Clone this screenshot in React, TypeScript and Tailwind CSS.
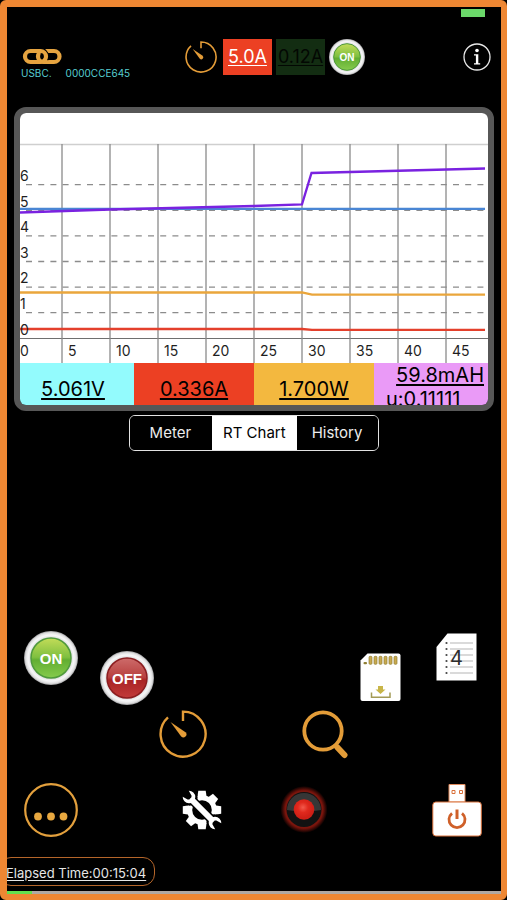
import { useState } from "react";

const metrics = [
  { value: "5.061V", tone: "bg-[#93fbfd] pr-2" },
  { value: "0.336A", tone: "bg-[#ec4023]" },
  { value: "1.700W", tone: "bg-[#f3b83f]" },
];

const tabs = ["Meter", "RT Chart", "History"];
const columns = [0, 1, 2, 3, 4, 5, 6, 7, 8, 9];
const rows = [0, 1, 2, 3, 4, 5, 6];

function LinkIcon() {
  return (
    <svg width="42" height="17" viewBox="0 0 42 17" fill="none" aria-hidden="true">
      <rect x="4" y="3" width="21" height="11" rx="5.5" stroke="#e6a440" strokeWidth="4.2" />
      <path d="M26 3h7a5.500 5.500 0 0 1 0 11H22a5.500 5.500 0 0 1-4.800-7.500" stroke="#000" strokeWidth="6.500" />
      <rect x="17" y="3" width="21.500" height="11" rx="5.500" stroke="#e6a440" strokeWidth="4.2" />
      <path d="M20 3a5.500 5.500 0 0 1 4.200 8" stroke="#000" strokeWidth="6.500" />
      <path d="M16 3h3.500a5.500 5.500 0 0 1 0 11H13" stroke="#e6a440" strokeWidth="4.2" />
    </svg>
  );
}

function TimerIcon({ size }: { size: number }) {
  return (
    <svg width={size} height={size} viewBox="0 0 48 48" fill="none" aria-hidden="true">
      <path d="M9 7.400A22.500 22.500 0 1 0 24 1.600V11" stroke="#e39c38" strokeWidth="2.400" />
      <path d="M11.500 12l15 10.200a3 3 0 1 1-4.300 4.300z" fill="#e39c38" />
    </svg>
  );
}

function RoundSwitch({ label, size, on }: { label: string; size: number; on: boolean }) {
  const id = `${label}-${size}`;
  return (
    <svg width={size} height={size} viewBox="0 0 54 54" aria-hidden="true">
      <defs>
        <radialGradient id={`ring-${id}`}>
          <stop offset="0.75" stopColor="#dcdcde" />
          <stop offset="0.85" stopColor="#f7f7f8" />
          <stop offset="0.94" stopColor="#dededf" />
          <stop offset="1" stopColor="#9d9d9f" />
        </radialGradient>
        <linearGradient id={`face-${id}`} x1="0" y1="0" x2="0" y2="1">
          <stop offset="0" stopColor={on ? "#c3dc58" : "#cd6b6a"} />
          <stop offset="0.48" stopColor={on ? "#7fc040" : "#b8403f"} />
          <stop offset="0.55" stopColor={on ? "#62ae32" : "#a92425"} />
          <stop offset="1" stopColor={on ? "#86cb4d" : "#c23a3a"} />
        </linearGradient>
      </defs>
      <circle cx="27" cy="27" r="27" fill={`url(#ring-${id})`} />
      <circle cx="27" cy="27" r="20" fill={`url(#face-${id})`} stroke={on ? "#4f9a3c" : "#8c1d20"} strokeWidth="1.500" />
      <text
        x="27"
        y="32.500"
        textAnchor="middle"
        fill="#fff"
        fontSize="15"
        fontWeight="700"
        fontFamily="'Liberation Sans', Arial, sans-serif"
      >
        {label}
      </text>
    </svg>
  );
}

function InfoIcon() {
  return (
    <svg width="28" height="28" viewBox="0 0 28 28" aria-hidden="true">
      <circle cx="14" cy="14" r="13" fill="none" stroke="#e8e8e8" strokeWidth="1.300" />
      <circle cx="14" cy="7.500" r="1.800" fill="#fff" />
      <path d="M11 11.200h4.300v9h1.900v1.200h-6.200v-1.200h1.900v-7.800H11z" fill="#fff" />
    </svg>
  );
}

function SdCardIcon() {
  return (
    <svg width="41" height="49" viewBox="0 0 41 49" aria-hidden="true">
      <path d="M7.500 .5H38.500a2 2 0 0 1 2 2v43.500a2 2 0 0 1-2 2H2.500a2 2 0 0 1-2-2V7.500z" fill="#fff" />
      <rect x="3.500" y="9" width="3.500" height="2.300" rx="1" fill="#8f7f35" />
      {[9, 14, 19, 24, 29, 34].map((x) => (
        <rect key={x} x={x} y="3.300" width="3" height="8" rx="1" fill="#c9a94f" stroke="#8f7f35" strokeWidth="0.700" />
      ))}
      <path d="M18 33h5v3.500h2.500l-5 4.500-5-4.500H18z" fill="#c8b548" />
      <path d="M11.500 39.500v4.800h18.500v-4.800" fill="none" stroke="#a39a55" strokeWidth="1.500" />
    </svg>
  );
}

function LogFileIcon() {
  return (
    <svg width="41" height="48" viewBox="0 0 41 48" aria-hidden="true">
      <path d="M11.500 .5H40.500V47.500H.5V14z" fill="#fff" />
      {[10, 16, 22, 28, 34, 40].map((y) => (
        <g key={y}>
          <circle cx="10.500" cy={y} r="1.100" fill="#444" />
          <path d={`M14 ${y}H37`} stroke="#b5b5b5" />
        </g>
      ))}
      <text x="20.500" y="32" textAnchor="middle" fill="#2d2d2d" fontSize="20" fontFamily="Inter, sans-serif">
        4
      </text>
    </svg>
  );
}

function SearchIcon() {
  return (
    <svg width="48" height="50" viewBox="0 0 48 50" fill="none" aria-hidden="true">
      <circle cx="21" cy="22" r="18.700" stroke="#e39c38" strokeWidth="3.800" />
      <path d="M32.500 36L35.500 38.500" stroke="#e39c38" strokeWidth="4.500" />
      <path d="M35.500 38.500L42.500 46" stroke="#e39c38" strokeWidth="6" strokeLinecap="round" />
    </svg>
  );
}

function MoreIcon() {
  return (
    <svg width="54" height="54" viewBox="0 0 54 54" aria-hidden="true">
      <circle cx="27" cy="27" r="25.800" fill="none" stroke="#e3a03d" strokeWidth="2.200" />
      {[14, 27, 39.5].map((cx) => (
        <circle key={cx} cx={cx} cy="33.500" r="3.900" fill="#e8a840" />
      ))}
    </svg>
  );
}

function ServiceIcon() {
  return (
    <svg width="40" height="40" viewBox="0 0 40 40" fill="none" aria-hidden="true">
      <circle cx="20" cy="20" r="12.300" stroke="#fff" strokeWidth="5" />
      {[0, 45, 90, 180, 225, 270].map((turn) => (
        <path key={turn} d="M15.300 7.500L16.300 .8h7.400l1 6.700z" fill="#fff" transform={`rotate(${turn} 20 20)`} />
      ))}
      {/* wrench laid over the cog with a dark gap round it */}
      <g transform="rotate(-45 20 20)">
        <path d="M20 4V36" stroke="#000" strokeWidth="9" />
        <circle cx="20" cy="2.500" r="8" fill="#000" />
        <circle cx="20" cy="37.500" r="8" fill="#000" />
        <path d="M20 5V35" stroke="#fff" strokeWidth="5.800" />
        <path d="M15.700-3a6.300 6.300 0 1 0 8.600 0l-1.500 5.500l-1.300 1h-3l-1.300-1z" fill="#fff" />
        <path d="M15.700 43a6.300 6.300 0 1 1 8.600 0l-1.500-5.500l-1.300-1h-3l-1.300 1z" fill="#fff" />
      </g>
    </svg>
  );
}

function RecordIcon() {
  return (
    <svg width="48" height="48" viewBox="0 0 48 48" aria-hidden="true">
      <defs>
        <radialGradient id="record-glow">
          <stop offset="0.7" stopColor="#7a1a10" />
          <stop offset="0.8" stopColor="#7a140c" />
          <stop offset="1" stopColor="#000" />
        </radialGradient>
        <radialGradient id="record-ball" cx="0.45" cy="0.4">
          <stop offset="0" stopColor="#f2594b" />
          <stop offset="0.5" stopColor="#e0291d" />
          <stop offset="1" stopColor="#cf1f16" />
        </radialGradient>
      </defs>
      <circle cx="24" cy="23.500" r="23.500" fill="url(#record-glow)" />
      <circle cx="24" cy="23.500" r="17.500" fill="#121212" />
      <path d="M7 24a17 17 0 0 1 34 0q-17 3-34 0z" fill="#363636" />
      <circle cx="24" cy="23.500" r="10.300" fill="url(#record-ball)" />
    </svg>
  );
}

function UsbIcon() {
  return (
    <svg width="50" height="54" viewBox="0 0 50 54" fill="none" aria-hidden="true">
      <path d="M17 1.500h16v17.500h-16z" fill="#fff" stroke="#e08a5c" />
      <path d="M20 7.500h3v3h-3zM27.500 7.500h3v3h-3z" stroke="#d9703a" />
      <rect x=".8" y="19" width="48.500" height="34" rx="3" fill="#fff" stroke="#d9703a" />
      <path d="M20 30.300a8 8 0 1 0 10 0" stroke="#cf6029" strokeWidth="2.800" />
      <path d="M25 26.500v9.500" stroke="#cf6029" strokeWidth="3" />
    </svg>
  );
}

function RealtimeChart() {
  return (
    <svg viewBox="0 0 468 250" className="block h-auto w-full bg-white" role="img" aria-label="Real time chart">
      <path d="M0 31.500H468" stroke="#cfcfcf" strokeWidth="1.500" />
      <path d="M0 225.500H468" stroke="#6f6f6f" />
      {columns.slice(1).map((i) => (
        <path key={i} d={`M${i * 48 - 6} 31V250`} stroke="#8a8a8a" strokeWidth="1.300" />
      ))}
      {rows.slice(1).map((i) => (
        <path key={i} d={`M6 ${225.3 - i * 25.6}H464`} stroke="#8c8c8c" strokeWidth="1.300" strokeDasharray="6 6.200" />
      ))}
      <g fill="none" strokeWidth="2.300">
        <path d="M0 95.800H465" stroke="#4a86d4" />
        <path d="M0 99.500L90 96.500L234 93L282 91.300L291.500 60L465 55.500" stroke="#7a22e0" />
        <path d="M0 179.500H282L292 181.700H465" stroke="#eaa63c" />
        <path d="M0 216H282L292 216.800H465" stroke="#e4402c" />
      </g>
      <g fill="#1f1f1f" fontSize="14" fontFamily="Inter, sans-serif">
        {rows.map((i) => (
          <text key={i} x="0" y={221.5 - i * 25.6}>
            {i}
          </text>
        ))}
        {columns.map((i) => (
          <text key={i} x={i * 48} y="243">
            {i * 5}
          </text>
        ))}
      </g>
    </svg>
  );
}

export default function App() {
  const [tab, setTab] = useState("RT Chart");

  return (
    <div className="min-h-screen bg-black font-['Inter',sans-serif]">
      <main className="flex min-h-screen flex-col overflow-hidden rounded-md border-[7px] border-r-[6px] border-b-[6px] border-[#ee8733]">
        <div className="flex justify-end pt-0.5 pr-4">
          <div className="h-2 w-6 bg-[#6bd86a]" role="img" aria-label="Battery" />
        </div>

        {/* device header */}
        <header className="mt-[15px] flex items-center pr-2.5 pl-3.5">
          <div className="w-[164px] pt-4">
            <LinkIcon />
            <div className="flex gap-3.5 text-[10px] leading-4 text-[#56cdd0]">
              <span>USBC.</span>
              <span>0000CCE645</span>
            </div>
          </div>
          <div className="flex items-center gap-1">
            <button type="button" aria-label="Timer" className="mr-0.5">
              <TimerIcon size={32} />
            </button>
            <button type="button" className="h-9 w-[49px] bg-[#ec4023] text-lg text-white underline underline-offset-2">
              5.0A
            </button>
            <button type="button" className="h-9 w-[49px] bg-[#132d12] text-lg text-[#030803] underline underline-offset-2">
              0.12A
            </button>
            <button type="button" aria-label="Output on">
              <RoundSwitch label="ON" size={36} on />
            </button>
          </div>
          <button type="button" aria-label="Info" className="ml-auto">
            <InfoIcon />
          </button>
        </header>

        {/* chart and live readings */}
        <section className="mx-[7px] mt-[26px] overflow-hidden rounded-xl border-[6px] border-[#575757]">
          <RealtimeChart />
          <div className="grid h-[42px] grid-cols-[114fr_120fr_120fr_114fr] overflow-hidden text-xl text-black">
            {metrics.map((m) => (
              <button
                key={m.value}
                type="button"
                className={`${m.tone} pt-1 leading-6 underline underline-offset-2`}
              >
                {m.value}
              </button>
            ))}
            <div className="flex flex-col bg-[#ea9af7] pl-3 leading-6">
              <button type="button" className="mr-1 self-end underline underline-offset-2">
                59.8mAH
              </button>
              <span>u:0.11111</span>
            </div>
          </div>
        </section>

        <div className="mt-1 flex self-center overflow-hidden rounded-md border border-[#e2e2e2] text-[15px]">
          {tabs.map((name) => (
            <button
              key={name}
              type="button"
              aria-pressed={tab === name}
              onClick={() => setTab(name)}
              className={`h-[34px] px-5 whitespace-nowrap first:pr-[21px] last:pr-4 last:pl-[15px] ${tab === name ? "bg-white px-[11px] text-black" : "bg-black text-[#ececec]"}`}
            >
              {name}
            </button>
          ))}
        </div>

        {/* controls */}
        <div className="mt-auto flex flex-col pt-10">
          <div className="flex justify-between pr-6 pl-[17px]">
            <div className="flex items-start gap-[22px]">
              <button type="button" aria-label="Turn on">
                <RoundSwitch label="ON" size={54} on />
              </button>
              <button type="button" aria-label="Turn off" className="mt-5">
                <RoundSwitch label="OFF" size={54} on={false} />
              </button>
            </div>
            <div className="flex items-start gap-[35px] pt-0.5">
              <button type="button" aria-label="Save to card" className="mt-5">
                <SdCardIcon />
              </button>
              <button type="button" aria-label="Log files">
                <LogFileIcon />
              </button>
            </div>
          </div>
          <div className="mt-1 flex justify-center gap-[95px]">
            <button type="button" aria-label="Set timer">
              <TimerIcon size={48} />
            </button>
            <button type="button" aria-label="Search">
              <SearchIcon />
            </button>
          </div>
          <div className="mt-6 flex items-center justify-between pr-[19px] pl-[17px]">
            <button type="button" aria-label="More">
              <MoreIcon />
            </button>
            <div className="flex items-center gap-[58px]">
              <button type="button" aria-label="Settings">
                <ServiceIcon />
              </button>
              <button type="button" aria-label="Record">
                <RecordIcon />
              </button>
            </div>
            <button type="button" aria-label="Device power">
              <UsbIcon />
            </button>
          </div>
        </div>

        <button
          type="button"
          className="mt-5 -ml-2 h-[29px] self-start rounded-xl border border-[#b5662a] pt-1 pr-2 pl-1.5 text-[13px] text-[#e6e6e6] underline underline-offset-2"
        >
          Elapsed Time:00:15:04
        </button>
        <div
          className="mt-[5px] h-[3px] bg-[#b0a8a2]"
          role="progressbar"
          aria-label="Elapsed"
          aria-valuenow={5}
          aria-valuemin={0}
          aria-valuemax={100}
        >
          <div className="h-full w-[5%] bg-[#62e04f]" />
        </div>
      </main>
    </div>
  );
}
